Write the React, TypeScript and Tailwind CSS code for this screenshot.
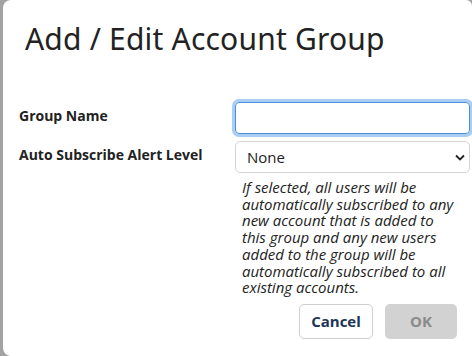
import React, { useState } from 'react';

export default function App() {
  const [groupName, setGroupName] = useState('');
  const [level, setLevel] = useState('None');

  return (
    <div className="w-[472px] h-[356px] bg-[#a3a3a3] pl-[3px] overflow-hidden">
      <div className="h-full bg-white rounded-l-lg rounded-tr-md flex flex-col" style={{ fontFamily: '"Open Sans", sans-serif' }}>
        {/* Header */}
        <div className="pl-[22px] pt-[21px] h-[88px]">
          <h1 className="text-[30px] leading-[36px] text-[#222] tracking-[0.2px]" style={{ fontFamily: '"Noto Sans", sans-serif' }}>
            Add / Edit Account Group
          </h1>
        </div>

        {/* Body */}
        <div className="grid grid-cols-[216px_1fr] pl-[16px] pr-[2px] pt-[14px] gap-y-[7px]">
          <label className="text-[14px] font-bold text-[#222] self-center -mt-[6px]">Group Name</label>
          <input
            autoFocus
            value={groupName}
            onChange={(e) => setGroupName(e.target.value)}
            className="h-[32px] w-full border border-[#4a90d9] rounded-[4px] px-2 text-[15px] outline-none ring-[3px] ring-[#a9cdf3]"
          />

          <label className="text-[14px] font-bold text-[#222] self-start pt-[3px]">Auto Subscribe Alert Level</label>
          <div className="flex flex-col">
            <div className="relative">
              <select
                value={level}
                onChange={(e) => setLevel(e.target.value)}
                className="appearance-none h-[32px] w-full border border-[#d4d4d4] rounded-[5px] pl-[11px] pr-6 text-[15px] text-[#222] bg-white outline-none"
              >
                <option>None</option>
                <option>Low</option>
                <option>Medium</option>
                <option>High</option>
              </select>
              <svg className="absolute right-[5px] top-[13px] pointer-events-none" width="10" height="7" viewBox="0 0 10 7">
                <path d="M1 1.5 L5 5.5 L9 1.5" fill="none" stroke="#222" strokeWidth="1.8" />
              </svg>
            </div>
            <p className="italic text-[15px] leading-[16.7px] text-[#222] pl-[7px] pr-[12px] pt-[6px]">
              If selected, all users will be automatically subscribed to any new account that is added to this group and any new users added to the group will be automatically subscribed to all existing accounts.
            </p>
          </div>
        </div>

        {/* Footer */}
        <div className="flex justify-end gap-[12px] pr-[15px] pt-[8px]">
          <button className="h-[35px] w-[74px] rounded-[5px] border border-[#cfcfcf] bg-white text-[15px] font-bold text-[#1d3557]">
            Cancel
          </button>
          <button disabled className="h-[35px] w-[72px] rounded-[5px] bg-[#d2d2d2] text-[15px] font-bold text-[#8a8a8a]">
            OK
          </button>
        </div>
      </div>
    </div>
  );
}
